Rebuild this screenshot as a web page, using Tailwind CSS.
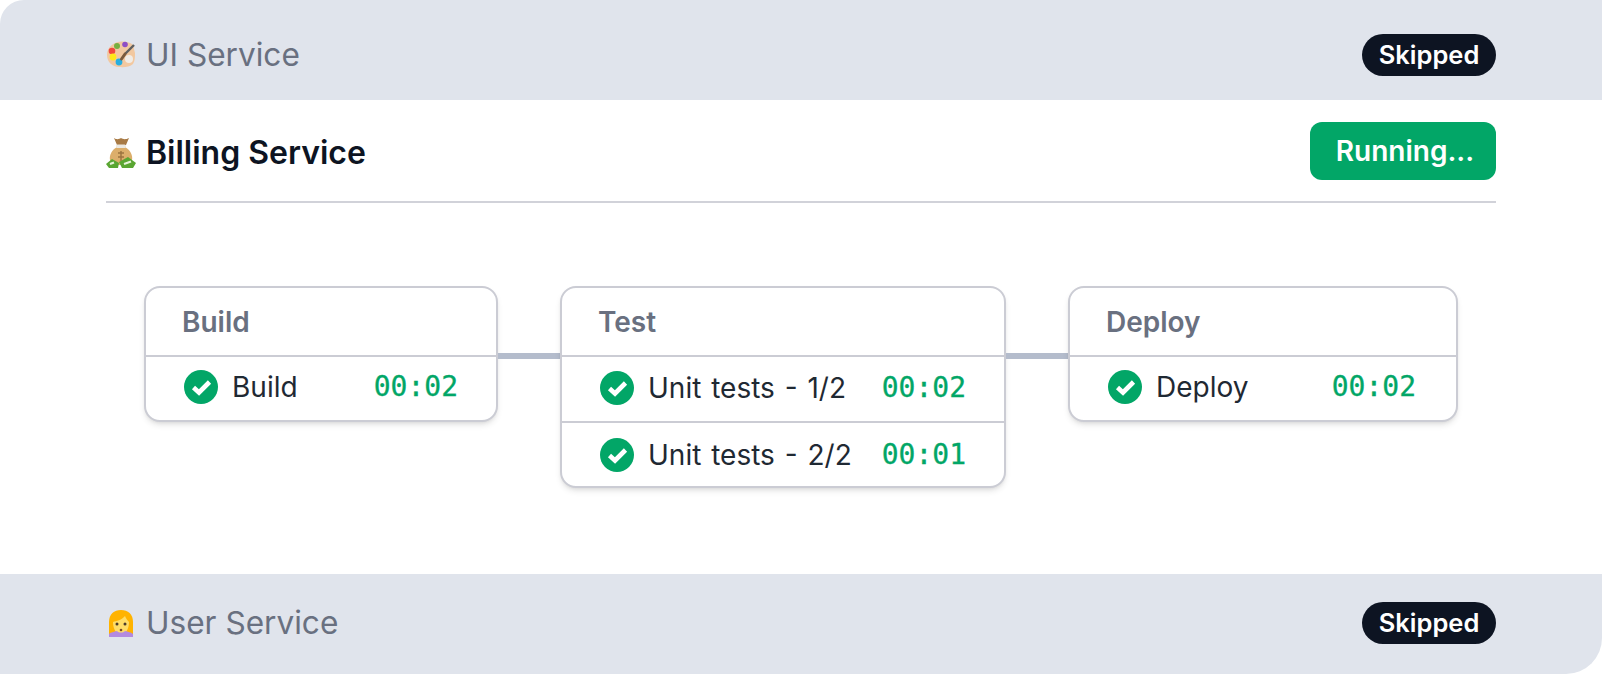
<!DOCTYPE html>
<html lang="en">
<head>
  <meta charset="UTF-8">
  <title>Pipeline</title>
  <script src="https://cdn.jsdelivr.net/npm/@tailwindcss/browser@4"></script>
</head>
<body class="bg-white font-['Inter',sans-serif] overflow-hidden">
  <div class="w-[1602px] h-[674px] flex flex-col rounded-tl-[24px] rounded-br-[36px] overflow-hidden bg-white">

    <!-- UI Service -->
    <div class="h-[100px] shrink-0 bg-[#e0e4ec] flex items-center justify-between pl-[106px] pr-[106px] pt-[10px]">
      <div class="flex items-center gap-[10px] text-[31.600px] text-[#697080]">
        <svg class="w-[30px] h-[30px]" viewBox="0 0 30 30">
          <path d="M1 15C1 7 8 1.500 16 1.500C21 1.500 25 3 27 5L29 13C29 17 29 21 27 24C24 27 18 27.500 13 27C6 26.500 1 22 1 15Z" fill="#f2c8a0"/>
          <circle cx="6" cy="11" r="3.300" fill="#f0483e"/>
          <circle cx="11" cy="6" r="3" fill="#76b041"/>
          <circle cx="19" cy="4.500" r="2.800" fill="#8e4ec6"/>
          <circle cx="7" cy="17" r="3.400" fill="#ffe71a"/>
          <circle cx="13" cy="22" r="3.400" fill="#27aee0"/>
          <circle cx="23" cy="19" r="4" fill="#f1ece6"/>
          <path d="M28 5L19 14" stroke="#5f5f5f" stroke-width="2.400"/>
          <path d="M19 14L15.500 19" stroke="#7b5a3c" stroke-width="3" stroke-linecap="round"/>
        </svg>
        <span>UI Service</span>
      </div>
      <span class="h-[42px] w-[134px] rounded-full bg-[#0d1422] text-white text-[25.500px] font-semibold flex items-center justify-center">Skipped</span>
    </div>

    <!-- Billing Service -->
    <div class="flex-1 bg-white px-[106px] flex flex-col">
      <div class="h-[103px] shrink-0 flex items-center justify-between border-b-2 border-[#d1d2d9]">
        <div class="flex items-center gap-[10px] text-[32px] font-semibold text-[#0d1422] mt-[4px]">
          <svg class="w-[30px] h-[30px]" viewBox="0 0 30 30">
            <path d="M8 0C11 2 13 1 15 0C17 1 19 2 23 0L20 7H11Z" fill="#a87a45"/>
            <path d="M11 9C6 12 3 17 4 22C5 26 10 27 15 27C20 27 25 26 26 22C27 17 24 12 19 9Z" fill="#dcae6b"/>
            <rect x="10" y="6.500" width="10" height="3.500" rx="1.500" fill="#ece8e0"/>
            <path d="M15 13V23M12 15H18M12 19H18" stroke="#9c7440" stroke-width="1.500"/>
            <path d="M0 26L6 21L13 25L12 30H3Z" fill="#5aa632"/>
            <path d="M13 24L22 19L30 25L27 30H16Z" fill="#5aa632"/>
            <path d="M4 26L8 24.500M18 26L25 23.500" stroke="#e6f3d8" stroke-width="2.200"/>
          </svg>
          <span>Billing Service</span>
        </div>
        <span class="h-[58px] w-[186px] pl-[4px] mt-[1px] rounded-[12px] bg-[#02a667] text-white text-[28px] font-semibold flex items-center justify-center">Running...</span>
      </div>

      <!-- Stages -->
      <div class="flex items-start pl-[38px] pt-[83px]">
        <div class="w-[354px] rounded-[16px] border-2 border-[#cbccd4] shadow-md bg-white">
          <div class="h-[69px] pl-[36px] pt-[13px] text-[28px] font-semibold text-[#697080] border-b-2 border-[#cbccd4]">Build</div>
          <div class="h-[63px] pb-[3px] flex items-center pl-[38px] pr-[38px]">
            <svg class="w-[34px] h-[34px] shrink-0" viewBox="0 0 34 34"><circle cx="17" cy="17" r="17" fill="#02a667"/><path d="M9.500 17.500L15 22.500L25.500 12" fill="none" stroke="#fff" stroke-width="4.600"/></svg>
            <span class="ml-[14px] text-[28px] text-[#1f2933]">Build</span>
            <span class="ml-auto text-[28px] text-[#02a667] font-['DejaVu_Sans_Mono',monospace] [-webkit-text-stroke:0.3px_#02a667]">00:02</span>
          </div>
        </div>
        <div class="w-[62px] h-[6px] mt-[67px] bg-[#b4bccc]"></div>

        <div class="w-[446px] rounded-[16px] border-2 border-[#cbccd4] shadow-md bg-white">
          <div class="h-[69px] pl-[36px] pt-[13px] text-[28px] font-semibold text-[#697080] border-b-2 border-[#cbccd4]">Test</div>
          <div class="h-[66px] pb-[3px] flex items-center pl-[38px] pr-[38px] border-b-2 border-[#cbccd4]">
            <svg class="w-[34px] h-[34px] shrink-0" viewBox="0 0 34 34"><circle cx="17" cy="17" r="17" fill="#02a667"/><path d="M9.500 17.500L15 22.500L25.500 12" fill="none" stroke="#fff" stroke-width="4.600"/></svg>
            <span class="ml-[14px] text-[28px] text-[#1f2933] [word-spacing:2px]">Unit tests - 1/2</span>
            <span class="ml-auto text-[28px] text-[#02a667] font-['DejaVu_Sans_Mono',monospace] [-webkit-text-stroke:0.3px_#02a667]">00:02</span>
          </div>
          <div class="h-[63px] flex items-center pl-[38px] pr-[38px]">
            <svg class="w-[34px] h-[34px] shrink-0" viewBox="0 0 34 34"><circle cx="17" cy="17" r="17" fill="#02a667"/><path d="M9.500 17.500L15 22.500L25.500 12" fill="none" stroke="#fff" stroke-width="4.600"/></svg>
            <span class="ml-[14px] text-[28px] text-[#1f2933] [word-spacing:2px]">Unit tests - 2/2</span>
            <span class="ml-auto text-[28px] text-[#02a667] font-['DejaVu_Sans_Mono',monospace] [-webkit-text-stroke:0.3px_#02a667]">00:01</span>
          </div>
        </div>
        <div class="w-[62px] h-[6px] mt-[67px] bg-[#b4bccc]"></div>

        <div class="w-[390px] rounded-[16px] border-2 border-[#cbccd4] shadow-md bg-white">
          <div class="h-[69px] pl-[36px] pt-[13px] text-[28px] font-semibold text-[#697080] border-b-2 border-[#cbccd4]">Deploy</div>
          <div class="h-[63px] pb-[3px] flex items-center pl-[38px] pr-[40px]">
            <svg class="w-[34px] h-[34px] shrink-0" viewBox="0 0 34 34"><circle cx="17" cy="17" r="17" fill="#02a667"/><path d="M9.500 17.500L15 22.500L25.500 12" fill="none" stroke="#fff" stroke-width="4.600"/></svg>
            <span class="ml-[14px] text-[28px] text-[#1f2933]">Deploy</span>
            <span class="ml-auto text-[28px] text-[#02a667] font-['DejaVu_Sans_Mono',monospace] [-webkit-text-stroke:0.3px_#02a667]">00:02</span>
          </div>
        </div>
      </div>
    </div>

    <!-- User Service -->
    <div class="h-[100px] shrink-0 bg-[#e0e4ec] flex items-center justify-between pl-[106px] pr-[106px] pb-[2px]">
      <div class="flex items-center gap-[10px] text-[31.600px] text-[#697080]">
        <svg class="w-[30px] h-[30px]" viewBox="0 0 30 30">
          <path d="M3 26V14C3 6 8 2 15 2C22 2 27 6 27 14V26Z" fill="#ffb300"/>
          <path d="M7 14C10 13 16 12 19 8C20 11 22 13 23 14C23 21 20 26 15 26C10 26 7 21 7 14Z" fill="#ffdd67"/>
          <path d="M3 29V26C5 24 8 24 11 23C13 25 17 25 19 23C22 24 25 24 27 26V29Z" fill="#b38ae0"/>
          <circle cx="11" cy="16" r="1.500" fill="#493b2a"/>
          <circle cx="19" cy="16" r="1.500" fill="#493b2a"/>
          <circle cx="15" cy="22" r="1.300" fill="#7a4a2a"/>
        </svg>
        <span>User Service</span>
      </div>
      <span class="h-[42px] w-[134px] rounded-full bg-[#0d1422] text-white text-[25.500px] font-semibold flex items-center justify-center">Skipped</span>
    </div>
  </div>
</body>
</html>
